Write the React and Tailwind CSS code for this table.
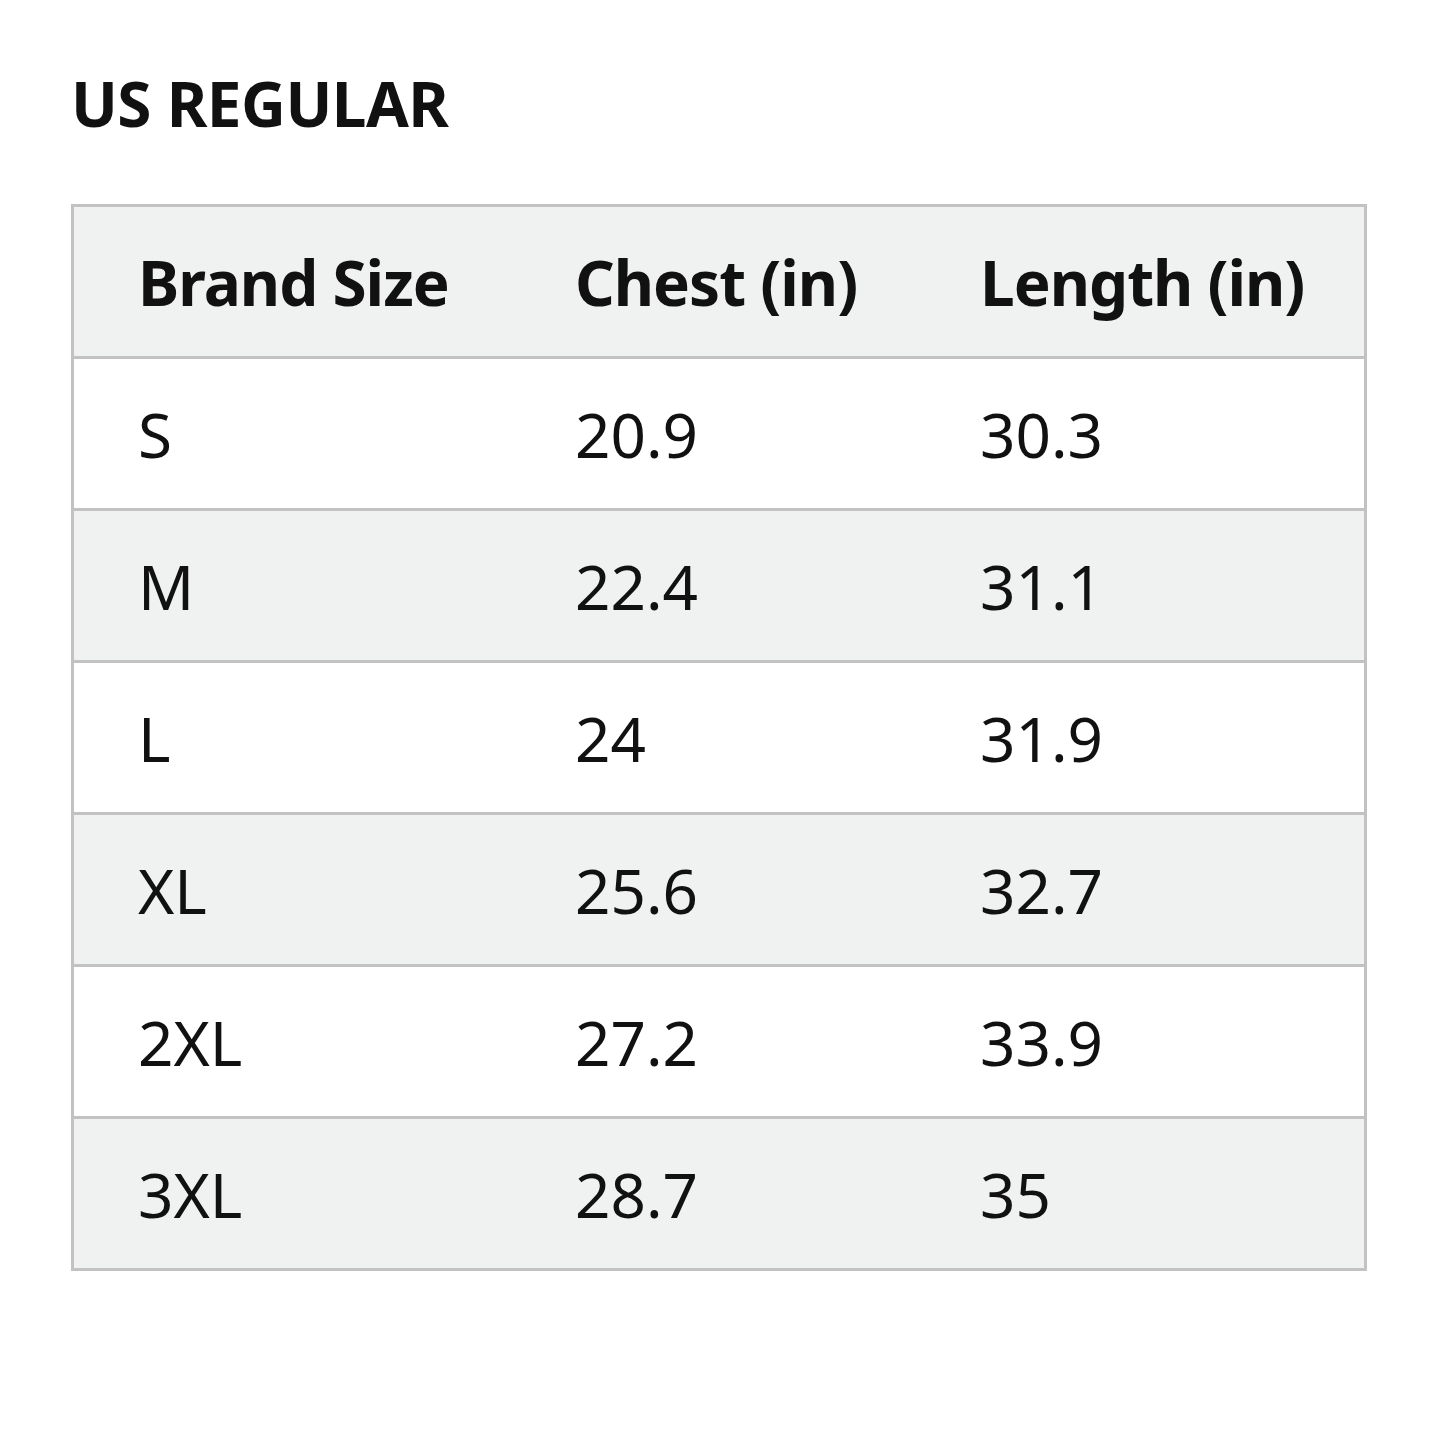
const rows = [
  ["S", "20.9", "30.3"],
  ["M", "22.4", "31.1"],
  ["L", "24", "31.9"],
  ["XL", "25.6", "32.7"],
  ["2XL", "27.2", "33.9"],
  ["3XL", "28.7", "35"],
];

function Row({ cells, head, shade }) {
  return (
    <div
      className={
        "grid grid-cols-[437px_405px_1fr] items-center " +
        (head ? "h-[149px] " : "h-[152px] border-t-[3px] border-[#c2c2c2] ") +
        (shade ? "bg-[#f0f1f1]" : "bg-white")
      }
    >
      {cells.map((c, i) => (
        <div key={i} className={"pl-[64px] " + (head ? "font-bold tracking-[-1px]" : "font-normal")}>
          {c}
        </div>
      ))}
    </div>
  );
}

export default function App() {
  return (
    <div className="w-[1445px] h-[1445px] bg-white text-[#111] text-[62px] leading-none font-['Noto_Sans',sans-serif]">
      <div className="pt-[72px] pl-[71px]">
        <h1 className="font-bold text-[62px] leading-none tracking-[-0.5px]">US REGULAR</h1>
      </div>
      <div className="mt-[70px] ml-[71px] w-[1296px] border-[3px] border-[#c2c2c2]">
        <Row cells={["Brand Size", "Chest (in)", "Length (in)"]} head shade />
        {rows.map((r, i) => (
          <Row key={r[0]} cells={r} shade={i % 2 === 1} />
        ))}
      </div>
    </div>
  );
}
